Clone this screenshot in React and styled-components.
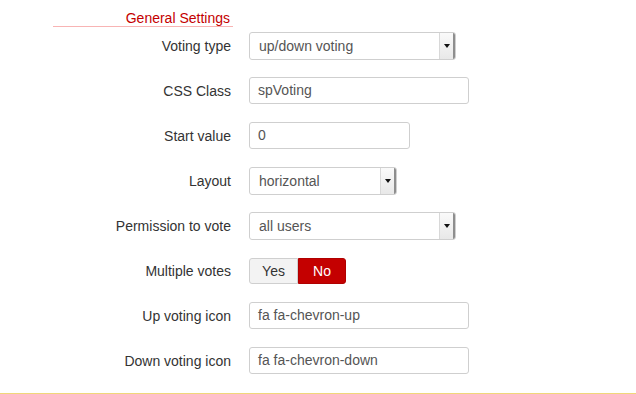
import React from "react";
import styled, { createGlobalStyle } from "styled-components";

const GlobalStyle = createGlobalStyle`
  html, body {
    margin: 0;
    padding: 0;
    background: #fff;
  }
  body {
    font-family: "Liberation Sans", Arial, sans-serif;
    color: #333;
  }
`;

const Page = styled.div`
  height: 394px;
  box-sizing: border-box;
  border-bottom: 1px solid #f0d77a;
  overflow: hidden;
`;

const Legend = styled.div`
  margin-left: 53px;
  width: 180px;
  padding-top: 10px;
  padding-right: 3px;
  box-sizing: border-box;
  text-align: right;
  font-size: 14px;
  line-height: 16px;
  color: #c40000;
  border-bottom: 1px solid #f8b4b4;
`;

const Form = styled.div`
  display: grid;
  grid-template-columns: 231px 1fr;
  column-gap: 18px;
  row-gap: 18px;
  margin-top: 5px;
`;

const Label = styled.label`
  text-align: right;
  font-size: 14px;
  color: #333;
  align-self: center;
`;

const Field = styled.div`
  display: flex;
  align-items: center;
  height: 27px;
`;

const TextInput = styled.div`
  width: ${p => p.$w}px;
  height: 27px;
  box-sizing: border-box;
  border: 1px solid #cfcfcf;
  border-radius: 3px;
  padding-left: 8px;
  font-size: 14px;
  line-height: 25px;
  color: #555;
  background: #fff;
`;

const Select = styled.div`
  width: ${p => p.$w}px;
  height: 28px;
  box-sizing: border-box;
  display: flex;
  border: 1px solid #cfcfcf;
  border-radius: 3px;
  overflow: hidden;
  font-size: 14px;
  color: #555;
  background: #fff;
`;

const SelectText = styled.div`
  flex: 1;
  padding-left: 9px;
  line-height: 26px;
`;

const SelectButton = styled.div`
  width: 13px;
  display: flex;
  align-items: center;
  justify-content: center;
  border-left: 1px solid #d8d8d8;
  border-right: 2px solid #8e8e8e;
  background: linear-gradient(to bottom, #fafafa, #e8e8e8);
`;

const Arrow = styled.div`
  width: 0;
  height: 0;
  border-left: 3px solid transparent;
  border-right: 3px solid transparent;
  border-top: 4px solid #111;
`;

const Toggle = styled.div`
  display: flex;
  height: 26px;
`;

const ToggleButton = styled.div`
  width: ${p => p.$w}px;
  box-sizing: border-box;
  display: flex;
  align-items: center;
  justify-content: center;
  font-size: 14px;
  color: ${p => (p.$active ? "#fff" : "#333")};
  background: ${p => (p.$active ? "#c40000" : "#f3f3f3")};
  border: 1px solid ${p => (p.$active ? "#b00000" : "#cfcfcf")};
  border-radius: ${p => (p.$first ? "3px 0 0 3px" : "0 3px 3px 0")};
`;

function SelectBox({ width, value }) {
  return (
    <Select $w={width}>
      <SelectText>{value}</SelectText>
      <SelectButton>
        <Arrow />
      </SelectButton>
    </Select>
  );
}

export default function App() {
  return (
    <Page>
      <GlobalStyle />
      <Legend>General Settings</Legend>
      <Form>
        <Label>Voting type</Label>
        <Field>
          <SelectBox width={207} value="up/down voting" />
        </Field>

        <Label>CSS Class</Label>
        <Field>
          <TextInput $w={220}>spVoting</TextInput>
        </Field>

        <Label>Start value</Label>
        <Field>
          <TextInput $w={161}>0</TextInput>
        </Field>

        <Label>Layout</Label>
        <Field>
          <SelectBox width={148} value="horizontal" />
        </Field>

        <Label>Permission to vote</Label>
        <Field>
          <SelectBox width={207} value="all users" />
        </Field>

        <Label>Multiple votes</Label>
        <Field>
          <Toggle>
            <ToggleButton $w={49} $first>Yes</ToggleButton>
            <ToggleButton $w={48} $active>No</ToggleButton>
          </Toggle>
        </Field>

        <Label>Up voting icon</Label>
        <Field>
          <TextInput $w={220}>fa fa-chevron-up</TextInput>
        </Field>

        <Label>Down voting icon</Label>
        <Field>
          <TextInput $w={220}>fa fa-chevron-down</TextInput>
        </Field>
      </Form>
    </Page>
  );
}
